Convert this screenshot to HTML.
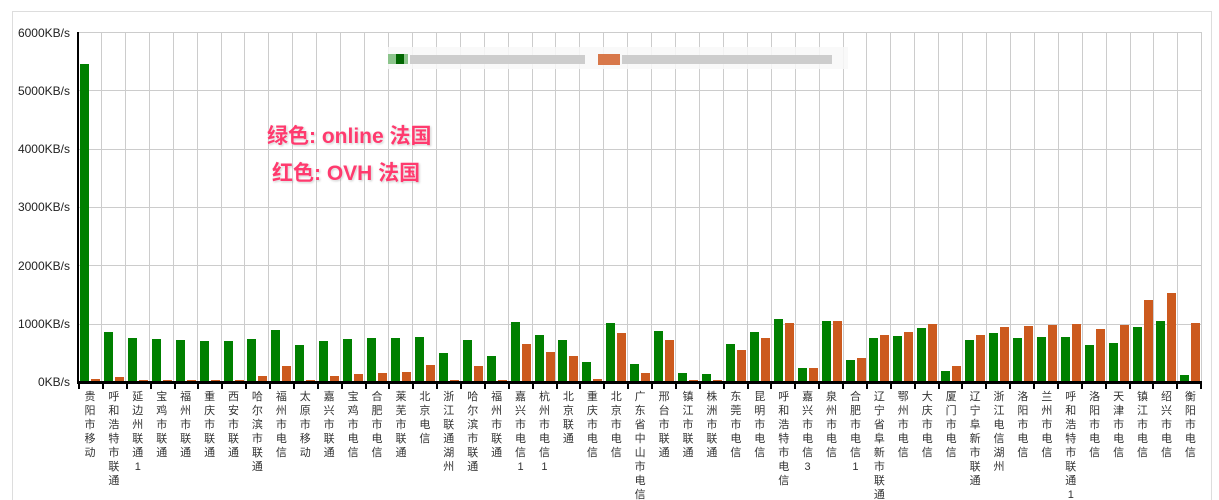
<!DOCTYPE html>
<html style="width:1219px;height:500px;overflow:hidden"><head><meta charset="utf-8"><style>
*{margin:0;padding:0;box-sizing:border-box}
body{width:1219px;height:500px;background:#fff;position:relative;overflow:hidden;font-family:"Liberation Sans","Noto Sans CJK SC",sans-serif}
.panel{position:absolute;left:12px;top:11px;width:1200px;height:489px;border:1px solid #ddd;border-bottom:none}
.yl{position:absolute;left:0;width:70px;text-align:right;font-size:12px;color:#222;line-height:14px}
.hg{position:absolute;left:78px;width:1124px;height:1px;background:#ccc}
.grid{position:absolute;left:78px;top:32px;width:1124px;height:350px;display:flex}
.grid div{flex:1;border-right:1px solid #ccc}
.bars{position:absolute;left:78px;top:32px;width:1124px;height:350px;display:flex;align-items:flex-end}
.c{flex:1;position:relative;height:100%}
.g,.o{position:absolute;bottom:0;width:9px}
.g{left:2px;background:#008000}.o{left:13px;background:#cc5a1e}
.ax{position:absolute;background:#000}
.ticks{position:absolute;left:78px;top:383px;width:1124px;height:6px;display:flex}
.ticks div{flex:1;border-left:2px solid #000}
.labs{position:absolute;left:78px;top:390px;width:1124px;display:flex}
.labs div{flex:1;display:flex;justify-content:center}
.labs span{width:12px;font-size:11px;line-height:14px;color:#333;word-break:break-all;text-align:center}
.note{position:absolute;font-size:21px;font-weight:bold;color:#ff3a6e;text-shadow:0 0 2px #fff,1px 1px 2px rgba(0,0,0,.25)}
</style></head><body>
<div class="panel"></div>
<div class="yl" style="top:26px">6000KB/s</div>
<div class="yl" style="top:84px">5000KB/s</div>
<div class="yl" style="top:142px">4000KB/s</div>
<div class="yl" style="top:200px">3000KB/s</div>
<div class="yl" style="top:259px">2000KB/s</div>
<div class="yl" style="top:317px">1000KB/s</div>
<div class="yl" style="top:375px">0KB/s</div>
<div class="hg" style="top:32px"></div>
<div class="hg" style="top:90px"></div>
<div class="hg" style="top:149px"></div>
<div class="hg" style="top:207px"></div>
<div class="hg" style="top:265px"></div>
<div class="hg" style="top:324px"></div>
<div class="grid"><div></div><div></div><div></div><div></div><div></div><div></div><div></div><div></div><div></div><div></div><div></div><div></div><div></div><div></div><div></div><div></div><div></div><div></div><div></div><div></div><div></div><div></div><div></div><div></div><div></div><div></div><div></div><div></div><div></div><div></div><div></div><div></div><div></div><div></div><div></div><div></div><div></div><div></div><div></div><div></div><div></div><div></div><div></div><div></div><div></div><div></div><div></div></div>
<div style="position:absolute;left:388px;top:47px;width:460px;height:22px;background:rgba(248,248,248,.85)"></div>
<div style="position:absolute;left:388px;top:54px;width:20px;height:10px;background:#8cc48c"></div>
<div style="position:absolute;left:396px;top:54px;width:8px;height:10px;background:#006600"></div>
<div style="position:absolute;left:410px;top:55px;width:175px;height:9px;background:#cdcdcd"></div>
<div style="position:absolute;left:598px;top:54px;width:22px;height:11px;background:#d8784a"></div>
<div style="position:absolute;left:622px;top:55px;width:210px;height:9px;background:#cdcdcd"></div>
<div class="bars">
<div class="c"><div class="g" style="height:318px"></div><div class="o" style="height:3px"></div></div>
<div class="c"><div class="g" style="height:50px"></div><div class="o" style="height:5px"></div></div>
<div class="c"><div class="g" style="height:44px"></div><div class="o" style="height:2px"></div></div>
<div class="c"><div class="g" style="height:43px"></div><div class="o" style="height:2px"></div></div>
<div class="c"><div class="g" style="height:42px"></div><div class="o" style="height:2px"></div></div>
<div class="c"><div class="g" style="height:41px"></div><div class="o" style="height:2px"></div></div>
<div class="c"><div class="g" style="height:41px"></div><div class="o" style="height:2px"></div></div>
<div class="c"><div class="g" style="height:43px"></div><div class="o" style="height:6px"></div></div>
<div class="c"><div class="g" style="height:52px"></div><div class="o" style="height:16px"></div></div>
<div class="c"><div class="g" style="height:37px"></div><div class="o" style="height:2px"></div></div>
<div class="c"><div class="g" style="height:41px"></div><div class="o" style="height:6px"></div></div>
<div class="c"><div class="g" style="height:43px"></div><div class="o" style="height:8px"></div></div>
<div class="c"><div class="g" style="height:44px"></div><div class="o" style="height:9px"></div></div>
<div class="c"><div class="g" style="height:44px"></div><div class="o" style="height:10px"></div></div>
<div class="c"><div class="g" style="height:45px"></div><div class="o" style="height:17px"></div></div>
<div class="c"><div class="g" style="height:29px"></div><div class="o" style="height:2px"></div></div>
<div class="c"><div class="g" style="height:42px"></div><div class="o" style="height:16px"></div></div>
<div class="c"><div class="g" style="height:26px"></div><div class="o" style="height:2px"></div></div>
<div class="c"><div class="g" style="height:60px"></div><div class="o" style="height:38px"></div></div>
<div class="c"><div class="g" style="height:47px"></div><div class="o" style="height:30px"></div></div>
<div class="c"><div class="g" style="height:42px"></div><div class="o" style="height:26px"></div></div>
<div class="c"><div class="g" style="height:20px"></div><div class="o" style="height:3px"></div></div>
<div class="c"><div class="g" style="height:59px"></div><div class="o" style="height:49px"></div></div>
<div class="c"><div class="g" style="height:18px"></div><div class="o" style="height:9px"></div></div>
<div class="c"><div class="g" style="height:51px"></div><div class="o" style="height:42px"></div></div>
<div class="c"><div class="g" style="height:9px"></div><div class="o" style="height:2px"></div></div>
<div class="c"><div class="g" style="height:8px"></div><div class="o" style="height:2px"></div></div>
<div class="c"><div class="g" style="height:38px"></div><div class="o" style="height:32px"></div></div>
<div class="c"><div class="g" style="height:50px"></div><div class="o" style="height:44px"></div></div>
<div class="c"><div class="g" style="height:63px"></div><div class="o" style="height:59px"></div></div>
<div class="c"><div class="g" style="height:14px"></div><div class="o" style="height:14px"></div></div>
<div class="c"><div class="g" style="height:61px"></div><div class="o" style="height:61px"></div></div>
<div class="c"><div class="g" style="height:22px"></div><div class="o" style="height:24px"></div></div>
<div class="c"><div class="g" style="height:44px"></div><div class="o" style="height:47px"></div></div>
<div class="c"><div class="g" style="height:46px"></div><div class="o" style="height:50px"></div></div>
<div class="c"><div class="g" style="height:54px"></div><div class="o" style="height:58px"></div></div>
<div class="c"><div class="g" style="height:11px"></div><div class="o" style="height:16px"></div></div>
<div class="c"><div class="g" style="height:42px"></div><div class="o" style="height:47px"></div></div>
<div class="c"><div class="g" style="height:49px"></div><div class="o" style="height:55px"></div></div>
<div class="c"><div class="g" style="height:44px"></div><div class="o" style="height:56px"></div></div>
<div class="c"><div class="g" style="height:45px"></div><div class="o" style="height:57px"></div></div>
<div class="c"><div class="g" style="height:45px"></div><div class="o" style="height:58px"></div></div>
<div class="c"><div class="g" style="height:37px"></div><div class="o" style="height:53px"></div></div>
<div class="c"><div class="g" style="height:39px"></div><div class="o" style="height:57px"></div></div>
<div class="c"><div class="g" style="height:55px"></div><div class="o" style="height:82px"></div></div>
<div class="c"><div class="g" style="height:61px"></div><div class="o" style="height:89px"></div></div>
<div class="c"><div class="g" style="height:7px"></div><div class="o" style="height:59px"></div></div>
</div>
<div class="ax" style="left:77px;top:32px;width:2px;height:352px"></div>
<div class="ax" style="left:77px;top:381px;width:1125px;height:3px"></div>
<div class="ticks"><div></div><div></div><div></div><div></div><div></div><div></div><div></div><div></div><div></div><div></div><div></div><div></div><div></div><div></div><div></div><div></div><div></div><div></div><div></div><div></div><div></div><div></div><div></div><div></div><div></div><div></div><div></div><div></div><div></div><div></div><div></div><div></div><div></div><div></div><div></div><div></div><div></div><div></div><div></div><div></div><div></div><div></div><div></div><div></div><div></div><div></div><div style="border-right:2px solid #000"></div></div>
<div class="labs">
<div><span>贵阳市移动</span></div><div><span>呼和浩特市联通</span></div><div><span>延边州联通1</span></div><div><span>宝鸡市联通</span></div><div><span>福州市联通</span></div><div><span>重庆市联通</span></div><div><span>西安市联通</span></div><div><span>哈尔滨市联通</span></div><div><span>福州市电信</span></div><div><span>太原市移动</span></div><div><span>嘉兴市联通</span></div><div><span>宝鸡市电信</span></div><div><span>合肥市电信</span></div><div><span>莱芜市联通</span></div><div><span>北京电信</span></div><div><span>浙江联通湖州</span></div><div><span>哈尔滨市联通</span></div><div><span>福州市联通</span></div><div><span>嘉兴市电信1</span></div><div><span>杭州市电信1</span></div><div><span>北京联通</span></div><div><span>重庆市电信</span></div><div><span>北京市电信</span></div><div><span>广东省中山市电信</span></div><div><span>邢台市联通</span></div><div><span>镇江市联通</span></div><div><span>株洲市联通</span></div><div><span>东莞市电信</span></div><div><span>昆明市电信</span></div><div><span>呼和浩特市电信</span></div><div><span>嘉兴市电信3</span></div><div><span>泉州市电信</span></div><div><span>合肥市电信1</span></div><div><span>辽宁省阜新市联通</span></div><div><span>鄂州市电信</span></div><div><span>大庆市电信</span></div><div><span>厦门市电信</span></div><div><span>辽宁阜新市联通</span></div><div><span>浙江电信湖州</span></div><div><span>洛阳市电信</span></div><div><span>兰州市电信</span></div><div><span>呼和浩特市联通1</span></div><div><span>洛阳市电信</span></div><div><span>天津市电信</span></div><div><span>镇江市电信</span></div><div><span>绍兴市电信</span></div><div><span>衡阳市电信</span></div>
</div>
<div class="note" style="left:267px;top:120px">绿色: online 法国</div>
<div class="note" style="left:272px;top:157px">红色: OVH 法国</div>
</body></html>
